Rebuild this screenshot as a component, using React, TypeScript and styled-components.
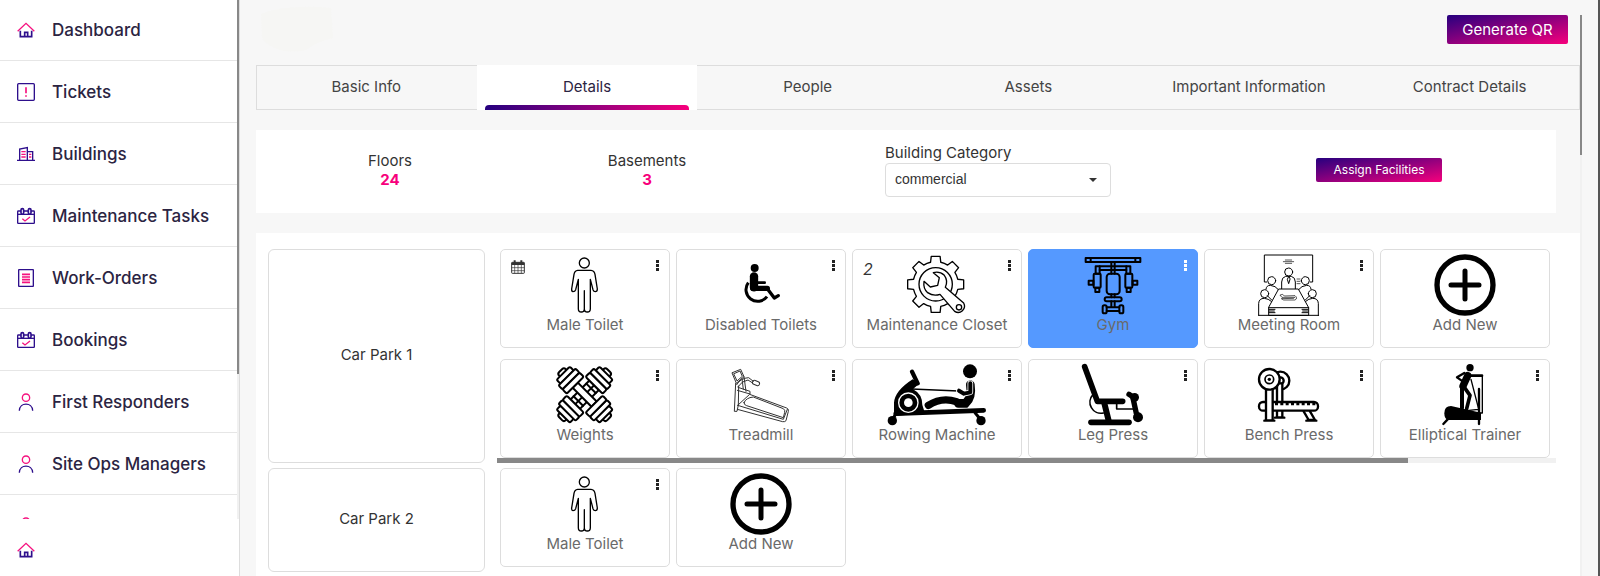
import React from "react";
import styled, { createGlobalStyle, css } from "styled-components";

const PURPLE = "#2e0f8c";
const PINK = "#f5127f";
const GRADIENT_FROM = "#26007f";
const GRADIENT_TO = "#f7007c";

const GlobalStyle = createGlobalStyle`
  *, *::before, *::after { box-sizing: border-box; }
  body {
    margin: 0;
    font-family: Inter, "Open Sans", sans-serif;
    font-size: 15px;
    color: #333;
    background: #f7f7f7;
    overflow: hidden;
  }
  button, select { font: inherit; cursor: pointer; }
`;

/* ---------- shell ---------- */

const Shell = styled.div`
  display: flex;
  height: 100vh;
  border-right: 2px solid #555;
`;

const Sidebar = styled.aside`
  flex: 0 0 240px;
  display: flex;
  flex-direction: column;
  background: #fff;
  border-right: 1px solid #ddd;
`;

const SidebarScroll = styled.div`
  flex: 1;
  min-height: 0;
  display: flex;
`;

const NavList = styled.nav`
  flex: 1;
  overflow: hidden;
`;

const NavLink = styled.a`
  display: flex;
  align-items: center;
  gap: 17px;
  height: 62px;
  padding-left: 17px;
  border-top: 1px solid #e6e6e6;
  color: #2b2442;
  font-size: 17px;
  font-weight: 500;
  text-decoration: none;
  white-space: nowrap;
  &:first-child {
    height: 60px;
    border-top: 0;
  }
`;

const Track = styled.div`
  flex: 0 0 2px;
  background: #f1f1f1;
`;

const Thumb = styled.div<{ $share: number }>`
  height: ${(p) => p.$share}%;
  background: #888;
`;

const SidebarFooter = styled.div`
  flex: 0 0 57px;
  display: flex;
  align-items: center;
  padding: 5px 17px 0;
`;

const FooterLink = styled.a`
  display: flex;
`;

const NavSvg = styled.svg`
  flex: none;
  width: 18px;
  height: 18px;
  fill: none;
  overflow: visible;
`;

const Main = styled.main`
  flex: 1;
  min-width: 0;
  display: flex;
  padding: 0 16px;
`;

const Content = styled.div`
  flex: 1;
  min-width: 0;
  overflow: hidden;
`;

const MainTrack = styled(Track)`
  margin-top: 15px;
`;

/* ---------- header and tabs ---------- */

const Header = styled.header`
  display: flex;
  justify-content: space-between;
  align-items: center;
  height: 65px;
  padding: 0 12px 6px 0;
`;

const Emblem = styled.svg`
  width: 80px;
  height: 52px;
`;

const GradientButton = styled.button<{ $small?: boolean }>`
  height: ${(p) => (p.$small ? 24 : 29)}px;
  width: ${(p) => (p.$small ? 126 : 121)}px;
  padding: 0 0 1px;
  border: 0;
  border-radius: 2px;
  color: #fff;
  font-size: ${(p) => (p.$small ? 12 : 15)}px;
  background: linear-gradient(to bottom right, ${GRADIENT_FROM}, ${GRADIENT_TO});
`;

const Tabs = styled.div`
  display: grid;
  grid-template-columns: repeat(6, 1fr);
  height: 45px;
  background: #f7f7f7;
  box-shadow: inset 0 0 0 1px #ddd;
`;

const Tab = styled.button<{ $active?: boolean }>`
  display: flex;
  flex-direction: column;
  align-items: stretch;
  padding: 0 8px;
  border: 0;
  background: none;
  color: #444;
  text-align: center;
  ${(p) =>
    p.$active &&
    css`
      background: #fff;
      color: #2b2442;
    `}
`;

const TabLabel = styled.span`
  height: 40px;
  padding-top: 4px;
  line-height: 36px;
  white-space: nowrap;
`;

const TabBar = styled.span`
  height: 5px;
  border-radius: 4px 4px 0 0;
  background: linear-gradient(to right, ${GRADIENT_FROM}, ${GRADIENT_TO});
`;

/* ---------- summary panel ---------- */

const Summary = styled.section`
  display: grid;
  grid-template-columns: 268fr 246fr 456fr 306fr;
  align-items: center;
  justify-items: center;
  height: 83px;
  margin: 20px 24px 20px 0;
  padding: 0 24px 3px 0;
  background: #fff;
`;

const Stat = styled.div`
  text-align: center;
  line-height: 19px;
`;

const StatValue = styled.div`
  color: ${GRADIENT_TO};
  font-weight: 700;
`;

const Field = styled.label`
  display: flex;
  flex-direction: column;
  width: 226px;
  line-height: 20px;
`;

const SelectWrap = styled.span`
  position: relative;
  display: block;
  &::after {
    content: "";
    position: absolute;
    right: 14px;
    top: 15px;
    border: 4px solid transparent;
    border-top-color: #333;
    border-bottom: 0;
    pointer-events: none;
  }
`;

const Select = styled.select`
  appearance: none;
  display: block;
  width: 100%;
  height: 34px;
  padding: 0 28px 2px 9px;
  border: 1px solid #ddd;
  border-radius: 4px;
  background: #fff;
  color: #333;
  font-family: "Liberation Sans", Arial, sans-serif;
  font-size: 14px;
`;

/* ---------- floors ---------- */

const Floors = styled.section`
  display: flex;
  flex-direction: column;
  gap: 5px;
  padding: 16px 24px 16px 12px;
  background: #fff;
`;

const FloorRow = styled.div`
  display: flex;
  gap: 12px;
`;

const FloorName = styled.div`
  flex: 0 0 217px;
  display: flex;
  align-items: center;
  justify-content: center;
  min-height: 104px;
  padding-bottom: 4px;
  border: 1px solid #ddd;
  border-radius: 6px;
`;

const Scroller = styled.div`
  flex: 1;
  min-width: 0;
  overflow: hidden;
`;

const Tiles = styled.div`
  display: grid;
  grid-template-columns: repeat(6, 170px);
  grid-auto-rows: 99px;
  gap: 11px 6px;
  padding: 0 3px;
`;

const ScrollTrack = styled.div`
  height: 5px;
  background: #f1f1f1;
`;

const ScrollThumb = styled.div`
  width: 86%;
  height: 100%;
  background: #888;
`;

const TileBox = styled.div<{ $selected?: boolean }>`
  position: relative;
  display: flex;
  flex-direction: column;
  align-items: center;
  padding-top: 4px;
  border: 1px solid ${(p) => (p.$selected ? "#5599ff" : "#ddd")};
  border-radius: 5px;
  background: ${(p) => (p.$selected ? "#5599ff" : "#fff")};
  color: #6a6a6a;
  line-height: 18px;
  white-space: nowrap;
`;

const AddButton = styled.button`
  display: flex;
  flex-direction: column;
  align-items: center;
  padding: 0;
  border: 0;
  background: none;
  color: inherit;
  line-height: 18px;
`;

const Picture = styled.svg`
  display: block;
  width: 62px;
  height: 62px;
  overflow: visible;
  fill: none;
  stroke: #000;
  stroke-linecap: round;
  stroke-linejoin: round;
`;

const MenuButton = styled.button<{ $light?: boolean }>`
  position: absolute;
  top: 9px;
  right: 7px;
  display: flex;
  padding: 1px 3px;
  border: 0;
  background: none;
  fill: ${(p) => (p.$light ? "#fff" : "#222")};
`;

const Badge = styled.span`
  position: absolute;
  top: 10px;
  left: 10px;
  display: flex;
  color: #333;
  font-size: 16px;
  font-style: italic;
`;

/* ---------- sidebar icons ---------- */

const HomeIcon = () => (
  <NavSvg viewBox="51 63 54 54">
    <path d="M53 94L78 70L103 94" stroke={PINK} strokeWidth="4" />
    <path d="M61 92V110H95V92M74 110V97H83V110" stroke={PURPLE} strokeWidth="5" />
  </NavSvg>
);

const TicketIcon = () => (
  <NavSvg viewBox="51 249 54 54">
    <rect x="53" y="251" width="50" height="50" rx="3" stroke={PURPLE} strokeWidth="4" />
    <path d="M78 262V280M78 286V290" stroke={PINK} strokeWidth="5" />
  </NavSvg>
);

const BuildingIcon = () => (
  <NavSvg viewBox="51 435 54 54">
    <path d="M51 481H105M59 481V447L82 443V481M82 455H98V481" stroke={PURPLE} strokeWidth="4" />
    <path d="M64 455H77M64 463H77M64 471H77M87 463H94M87 471H94" stroke={PINK} strokeWidth="4" />
  </NavSvg>
);

const CalendarCheckIcon = () => (
  <NavSvg viewBox="51 620 54 54">
    <rect x="53" y="632" width="50" height="37" rx="2" stroke={PURPLE} strokeWidth="4" />
    <path d="M53 642H103" stroke={PURPLE} strokeWidth="4" />
    <rect x="63" y="625" width="8" height="16" rx="4" fill="#fff" stroke={PURPLE} strokeWidth="5" />
    <rect x="85" y="625" width="8" height="16" rx="4" fill="#fff" stroke={PURPLE} strokeWidth="5" />
    <path d="M67 655L75 662L90 650" stroke={PINK} strokeWidth="4" />
  </NavSvg>
);

const OrderIcon = () => (
  <NavSvg viewBox="51 805 54 54">
    <rect x="56" y="807" width="44" height="50" rx="1" stroke={PURPLE} strokeWidth="4" />
    <path d="M66 821H90M66 829H90M66 837H90M66 845H90" stroke={PINK} strokeWidth="5" />
  </NavSvg>
);

const PersonIcon = () => (
  <NavSvg viewBox="51 307 54 54">
    <circle cx="78" cy="321" r="11" stroke={PINK} strokeWidth="4" />
    <path d="M58 360C59 334 97 334 98 360" stroke={PURPLE} strokeWidth="4" />
  </NavSvg>
);

/* ---------- facility pictures ---------- */

const ManPicture = () => (
  <Picture viewBox="192 42 186 186" strokeWidth="4">
    <circle cx="283" cy="69" r="15" />
    <path d="M263 91H303Q313 92 315 103L322 147Q322 155 316 155Q311 155 309 149L301 118V206Q301 216 292 216Q283 216 283 206V152M283 206Q283 216 274 216Q265 216 265 206V118L257 149Q255 155 249 155Q244 154 245 147L252 103Q254 92 263 91" />
  </Picture>
);

const WheelchairPicture = () => (
  <Picture viewBox="720 42 186 186">
    <circle cx="794" cy="84" r="12" fill="#000" stroke="none" />
    <path d="M792 109V142" strokeWidth="25" />
    <path d="M800 128H824" strokeWidth="8" />
    <path d="M788 145H832" strokeWidth="16" />
    <path d="M832 146L853 174L865 167" strokeWidth="10" />
    <path d="M775 128A35 35 0 1 0 831 170" strokeWidth="9" strokeLinecap="butt" />
  </Picture>
);

const gearPath = (() => {
  const at = (deg: number, r: number) => {
    const a = (deg * Math.PI) / 180;
    return `${(272 + r * Math.cos(a)).toFixed(1)} ${(133 + r * Math.sin(a)).toFixed(1)}`;
  };
  let d = "";
  for (let i = 0; i < 8; i++) {
    const t = i * 45;
    d += `${i ? "A68 68 0 0 1" : "M"}${at(t - 13, 68)}L${at(t - 9, 85)}L${at(t + 9, 85)}L${at(t + 13, 68)}`;
  }
  return `${d}A68 68 0 0 1 ${at(-13, 68)}Z`;
})();

const GearPicture = () => (
  <Picture viewBox="183 42 186 186" strokeWidth="4">
    <path d={gearPath} />
    <circle cx="272" cy="133" r="50" />
    <path
      fill="#fff"
      d="M265 98L283 113L278 136L256 141L237 124Q234 146 248 158Q265 170 285 163L329 214A19 19 0 0 0 356 189L301 142Q310 122 298 106Q284 93 265 98Z"
    />
    <circle cx="342" cy="202" r="8" />
  </Picture>
);

const GymSide = () => (
  <>
    <rect x="752" y="79" width="12" height="22" />
    <rect x="746" y="101" width="21" height="42" rx="3" />
    <rect x="731" y="122" width="14" height="12" />
    <rect x="751" y="143" width="12" height="13" />
    <rect x="773" y="196" width="12" height="24" rx="5" />
    <path d="M737 54V66" />
  </>
);

const GymPicture = () => (
  <Picture viewBox="711 42 186 186" strokeWidth="6">
    <rect x="722" y="54" width="164" height="12" />
    <path d="M799 66V101M809 66V101M764 79H844M764 90H844M799 163V172M809 163V172M799 184V201M809 184V201M785 202H823M785 213H823" />
    <rect x="785" y="101" width="39" height="62" rx="10" />
    <rect x="779" y="172" width="51" height="12" rx="6" />
    <GymSide />
    <g transform="translate(1608 0) scale(-1 1)">
      <GymSide />
    </g>
  </Picture>
);

const MeetingSide = () => (
  <>
    <circle cx="230" cy="122" r="12" />
    <circle cx="209" cy="161" r="12" />
    <path d="M213 147Q214 136 226 136L240 140L249 148M191 226V190Q192 175 208 175Q220 176 229 184M217 167L230 180M222 208H240M222 213H238M222 218H240" />
  </>
);

const MeetingPicture = () => (
  <Picture viewBox="189 42 186 186" strokeWidth="3">
    <path d="M215 126H208V45H353V126H346" />
    <path d="M265 65H296M271 60H290M271 70H290M306 117H315M306 124H315M306 131H315" strokeWidth="2" />
    <circle cx="281" cy="96" r="12" />
    <path d="M260 146V126Q260 112 272 109H289Q301 112 301 126V146M281 110L277 118L281 131L285 118Z" />
    <path d="M252 147H310L341 203V226H221V203ZM221 203H341M191 226H371" />
    <path d="M256 165L263 163L268 168L300 167Q306 170 304 177L300 180L266 180L259 176L296 175L299 172L262 172Z" strokeWidth="2" />
    <MeetingSide />
    <g transform="translate(561 0) scale(-1 1)">
      <MeetingSide />
    </g>
  </Picture>
);

const AddPicture = () => (
  <Picture viewBox="0 0 186 186">
    <circle cx="93" cy="93" r="84" strokeWidth="16" />
    <path d="M93 51V135M51 93H135" strokeWidth="15" />
  </Picture>
);

const DumbbellEnds = () => (
  <>
    {[1, -1].map((s) => (
      <g key={s} transform={`scale(${s} 1)`}>
        <rect x="86" y="-14" width="16" height="28" rx="8" />
        <rect x="74" y="-28" width="17" height="56" rx="5" />
        <rect x="58" y="-36" width="17" height="72" rx="5" />
        <rect x="40" y="-36" width="18" height="72" rx="5" />
      </g>
    ))}
  </>
);

const WeightsPicture = () => (
  <Picture viewBox="192 42 186 186" strokeWidth="6">
    <g transform="translate(284 134) rotate(-45)" fill="#fff">
      <rect x="-40" y="-20" width="80" height="40" />
      <path d="M-40 0H40M-27 -20V20M27 -20V20" />
      <DumbbellEnds />
    </g>
    <g transform="translate(284 134) rotate(45)" fill="#fff">
      <rect x="-40" y="-11" width="80" height="22" />
      <DumbbellEnds />
    </g>
  </Picture>
);

const TreadmillPicture = () => (
  <Picture viewBox="720 42 186 186" strokeWidth="3" style={{ stroke: "#333" }}>
    <path d="M727 68L752 58L762 80L740 99ZM732 71L750 63L757 79L742 92Z" />
    <path d="M737 100L733 184H741L745 165L746 108M762 80L768 124M756 86L760 118" />
    <path d="M740 104Q752 84 776 83L790 94M744 110Q756 92 774 90L788 99" />
    <rect x="787" y="93" width="22" height="12" rx="6" transform="rotate(22 798 99)" />
    <path d="M744 112L780 124V132L742 121" />
    <path d="M743 166L779 133L890 174Q897 177 895 184L888 212Q885 216 878 215L742 178M743 166L880 208L892 178" />
    <path d="M762 158Q768 143 790 141L880 176Q886 180 884 187L880 203L770 167Q762 165 762 158Z" />
  </Picture>
);

const RowingPicture = () => (
  <Picture viewBox="183 42 186 186">
    <g fill="#000" stroke="none">
      <circle cx="375" cy="64" r="21" />
      <circle cx="142" cy="212" r="14" />
      <circle cx="408" cy="212" r="14" />
      <path d="M147 198V158Q150 122 203 88L225 101Q206 113 204 118Q232 132 232 165L240 190Z" />
    </g>
    <path d="M152 191L416 181" strokeWidth="14" />
    <path d="M201 65L218 100" strokeWidth="13" />
    <path d="M200 117L340 123" strokeWidth="4" />
    <path d="M390 188L405 206M152 192L142 210" strokeWidth="9" />
    <path d="M250 166Q290 140 335 155" strokeWidth="22" />
    <path d="M340 160H362Q382 142 376 104" strokeWidth="26" strokeLinejoin="miter" />
    <path d="M376 100V127L357 131L342 122" stroke="#fff" strokeWidth="17" />
    <path d="M376 100V127L357 131L342 122" strokeWidth="12" />
    <circle cx="190" cy="158" r="29" stroke="#fff" strokeWidth="4" />
    <circle cx="190" cy="158" r="13" fill="#fff" stroke="none" />
  </Picture>
);

const LegPressPicture = () => (
  <Picture viewBox="711 42 186 186">
    <path d="M719 50L757 154H833" strokeWidth="17" />
    <path d="M778 160L791 212" strokeWidth="18" />
    <path d="M738 217H852" strokeWidth="17" />
    <path d="M744 134A33 33 0 0 0 775 189M815 162V177H865" strokeWidth="5" />
    <path d="M852 133L863 140L874 190" strokeWidth="16" />
    <circle cx="869" cy="142" r="13" fill="#000" stroke="none" />
    <circle cx="879" cy="202" r="15" fill="#000" stroke="none" />
  </Picture>
);

const BenchPicture = () => (
  <Picture viewBox="189 42 186 186" strokeWidth="7" strokeLinecap="butt">
    <circle cx="256" cy="92" r="27" />
    <circle cx="256" cy="92" r="10" />
    <path d="M246 100H262V202H246ZM240 203H268" fill="#fff" />
    <rect x="192" y="156" width="177" height="26" rx="12" fill="#fff" />
    <path d="M240 162H362" strokeDasharray="9 7" style={{ strokeLinecap: "butt" }} />
    <path d="M326 184L341 210H360L345 184M334 212H364" />
    <path d="M213 112H233V211H213ZM208 212H238" fill="#fff" />
    <circle cx="223" cy="88" r="31" fill="#fff" />
    <circle cx="223" cy="88" r="13" strokeWidth="5" />
    <circle cx="223" cy="88" r="5" fill="#000" stroke="none" />
  </Picture>
);

const EllipticalPicture = () => (
  <Picture viewBox="717 42 186 186">
    <circle cx="825" cy="53" r="11" fill="#000" stroke="none" />
    <path d="M818 77L804 108" strokeWidth="22" />
    <path d="M828 77H861" strokeWidth="8" />
    <path d="M808 69L786 82L800 92" strokeWidth="7" />
    <path d="M801 112V174" strokeWidth="12" />
    <path d="M808 112L825 136L815 176" strokeWidth="11" />
    <path d="M852 117V222" strokeWidth="7" />
    <path d="M862 78V189H846M828 88L853 185M815 182L850 178" strokeWidth="4" />
    <path d="M748 190Q748 168 768 168L858 188V210H760Q748 208 748 190Z" fill="#000" stroke="none" />
    <path d="M758 208L745 222" strokeWidth="7" />
  </Picture>
);

const DotsIcon = () => (
  <svg width="3" height="12" viewBox="0 0 3 12">
    <rect width="3" height="3" />
    <rect y="4" width="3" height="3" />
    <rect y="8" width="3" height="3" />
  </svg>
);

const CalendarIcon = () => (
  <svg width="14" height="14" viewBox="0 0 42 42" fill="none" stroke="#333">
    <rect x="2" y="7" width="38" height="33" rx="2" strokeWidth="3" />
    <path d="M2 11H40" strokeWidth="8" />
    <path d="M2 23H40M2 32H40M11 14V40M21 14V40M31 14V40" strokeWidth="2" />
    <path d="M11 1V10M31 1V10" strokeWidth="6" />
  </svg>
);

/* ---------- data ---------- */

type Facility = {
  name: string;
  Icon: React.ComponentType;
  badge?: React.ReactNode;
  selected?: boolean;
  add?: boolean;
};

const addNew: Facility = { name: "Add New", Icon: AddPicture, add: true };

const floors: { name: string; scrollable?: boolean; facilities: Facility[] }[] = [
  {
    name: "Car Park 1",
    scrollable: true,
    facilities: [
      { name: "Male Toilet", Icon: ManPicture, badge: <CalendarIcon /> },
      { name: "Disabled Toilets", Icon: WheelchairPicture },
      { name: "Maintenance Closet", Icon: GearPicture, badge: "2" },
      { name: "Gym", Icon: GymPicture, selected: true },
      { name: "Meeting Room", Icon: MeetingPicture },
      addNew,
      { name: "Weights", Icon: WeightsPicture },
      { name: "Treadmill", Icon: TreadmillPicture },
      { name: "Rowing Machine", Icon: RowingPicture },
      { name: "Leg Press", Icon: LegPressPicture },
      { name: "Bench Press", Icon: BenchPicture },
      { name: "Elliptical Trainer", Icon: EllipticalPicture },
    ],
  },
  {
    name: "Car Park 2",
    facilities: [{ name: "Male Toilet", Icon: ManPicture }, addNew],
  },
];

const navItems: { label: string; Icon: React.ComponentType }[] = [
  { label: "Dashboard", Icon: HomeIcon },
  { label: "Tickets", Icon: TicketIcon },
  { label: "Buildings", Icon: BuildingIcon },
  { label: "Maintenance Tasks", Icon: CalendarCheckIcon },
  { label: "Work-Orders", Icon: OrderIcon },
  { label: "Bookings", Icon: CalendarCheckIcon },
  { label: "First Responders", Icon: PersonIcon },
  { label: "Site Ops Managers", Icon: PersonIcon },
  { label: "", Icon: PersonIcon },
];

const tabs = ["Basic Info", "Details", "People", "Assets", "Important Information", "Contract Details"];

const Tile = ({ name, Icon, badge, selected, add }: Facility) => (
  <TileBox $selected={selected}>
    {add ? (
      <AddButton>
        <Icon />
        {name}
      </AddButton>
    ) : (
      <>
        {badge && <Badge>{badge}</Badge>}
        <Icon />
        {name}
        <MenuButton $light={selected}>
          <DotsIcon />
        </MenuButton>
      </>
    )}
  </TileBox>
);

export default function App() {
  return (
    <>
      <GlobalStyle />
      <Shell>
        <Sidebar>
          <SidebarScroll>
            <NavList>
              {navItems.map(({ label, Icon }, i) => (
                <NavLink href="#" key={i}>
                  <Icon />
                  {label}
                </NavLink>
              ))}
            </NavList>
            <Track>
              <Thumb $share={72} />
            </Track>
          </SidebarScroll>
          <SidebarFooter>
            <FooterLink href="#">
              <HomeIcon />
            </FooterLink>
          </SidebarFooter>
        </Sidebar>
        <Main>
          <Content>
            <Header>
              <Emblem viewBox="0 0 80 52">
                <path d="M5 10Q30 0 75 4L77 34Q60 38 50 46Q20 52 6 34Z" fill="#f6f6f4" />
              </Emblem>
              <GradientButton>Generate QR</GradientButton>
            </Header>
            <Tabs>
              {tabs.map((t) => (
                <Tab key={t} $active={t === "Details"}>
                  <TabLabel>{t}</TabLabel>
                  {t === "Details" && <TabBar />}
                </Tab>
              ))}
            </Tabs>
            <Summary>
              <Stat>
                Floors
                <StatValue>24</StatValue>
              </Stat>
              <Stat>
                Basements
                <StatValue>3</StatValue>
              </Stat>
              <Field>
                Building Category
                <SelectWrap>
                  <Select defaultValue="commercial">
                    <option value="commercial">commercial</option>
                  </Select>
                </SelectWrap>
              </Field>
              <GradientButton $small>Assign Facilities</GradientButton>
            </Summary>
            <Floors>
              {floors.map((floor) => (
                <FloorRow key={floor.name}>
                  <FloorName>{floor.name}</FloorName>
                  <Scroller>
                    <Tiles>
                      {floor.facilities.map((f) => (
                        <Tile key={f.name} {...f} />
                      ))}
                    </Tiles>
                    {floor.scrollable && (
                      <ScrollTrack>
                        <ScrollThumb />
                      </ScrollTrack>
                    )}
                  </Scroller>
                </FloorRow>
              ))}
            </Floors>
          </Content>
          <MainTrack>
            <Thumb $share={25} />
          </MainTrack>
        </Main>
      </Shell>
    </>
  );
}
